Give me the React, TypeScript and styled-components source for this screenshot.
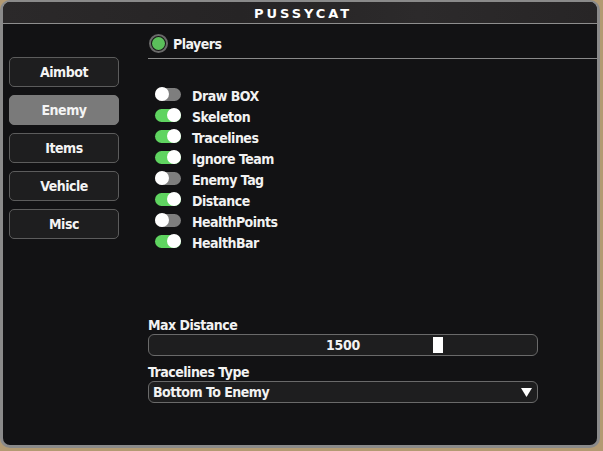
import React from "react";
import styled, { createGlobalStyle } from "styled-components";

const Global = createGlobalStyle`
  html, body { margin: 0; padding: 0; }
  body {
    width: 603px; height: 451px; overflow: hidden;
    background: #b39a72;
    font-family: "DejaVu Sans Condensed", "DejaVu Sans", sans-serif;
    font-stretch: condensed;
    font-weight: bold;
    color: #f2f2f2;
  }
`;

const Window = styled.div`
  box-sizing: border-box;
  width: 600px;
  height: 448px;
  border: 3px solid #8a8a8a;
  border-top-width: 2px;
  border-radius: 10px;
  background: #121214;
  overflow: hidden;
  display: flex;
  flex-direction: column;
`;

const TitleBar = styled.div`
  height: 22px;
  flex: none;
  background: linear-gradient(90deg, #2b292a, #262425 40%, #2c2a2b 70%, #272526);
  border-bottom: 1px solid #8e8e8e;
  display: flex;
  align-items: center;
  justify-content: center;
  font-family: "DejaVu Sans", sans-serif;
  font-stretch: normal;
  font-size: 13px;
  letter-spacing: 2.9px;
  padding-left: 6px;
  padding-top: 1px;
  box-sizing: border-box;
  color: #ffffff;
`;

const Body = styled.div`
  flex: 1;
  display: flex;
`;

const Sidebar = styled.div`
  width: 145px;
  flex: none;
  box-sizing: border-box;
  padding: 33px 0 0 6px;
  display: flex;
  flex-direction: column;
  gap: 8px;
`;

const NavButton = styled.div<{ $active?: boolean }>`
  box-sizing: border-box;
  width: 110px;
  height: 30px;
  border-radius: 5px;
  border: 1px solid ${(p) => (p.$active ? "#7a7a7a" : "#5c5c5c")};
  background: ${(p) => (p.$active ? "#7a7a7a" : "#1e1e1f")};
  display: flex;
  align-items: center;
  justify-content: center;
  font-size: 14px;
  letter-spacing: -0.5px;
  color: #f4f4f4;
`;

const Content = styled.div`
  flex: 1;
  display: flex;
  flex-direction: column;
`;

const Header = styled.div`
  margin-top: 10px;
  height: 24px;
  border-bottom: 1px solid #8a8a8a;
  display: flex;
  align-items: flex-start;
  gap: 5px;
`;

const Radio = styled.div`
  box-sizing: border-box;
  width: 19px;
  height: 19px;
  margin-left: 1px;
  border-radius: 50%;
  border: 2px solid #6a6a6a;
  background: #141414;
  padding: 1px;
  &::after {
    content: "";
    display: block;
    width: 100%;
    height: 100%;
    border-radius: 50%;
    background: #5bbf5b;
  }
`;

const HeaderLabel = styled.span`
  font-size: 14px;
  letter-spacing: -0.5px;
  line-height: 20px;
`;

const ToggleList = styled.div`
  margin-top: 30px;
  margin-left: 7px;
  display: flex;
  flex-direction: column;
  gap: 7px;
`;

const ToggleRow = styled.div`
  display: flex;
  align-items: center;
  height: 14px;
  gap: 11px;
`;

const Track = styled.div<{ $on: boolean }>`
  position: relative;
  width: 26px;
  height: 13px;
  border-radius: 7px;
  background: ${(p) => (p.$on ? "#5fd460" : "#7e7e7e")};
  margin-top: -4px;
  &::after {
    content: "";
    position: absolute;
    top: -0.5px;
    left: ${(p) => (p.$on ? "12px" : "0px")};
    width: 14px;
    height: 14px;
    border-radius: 50%;
    background: #ffffff;
  }
`;

const ToggleLabel = styled.span`
  font-size: 14px;
  letter-spacing: -0.5px;
  line-height: 14px;
`;

const Spacer = styled.div`
  flex: 1;
`;

const FieldLabel = styled.div`
  font-size: 14px;
  letter-spacing: -0.5px;
  line-height: 14px;
  margin-bottom: 2px;
`;

const Slider = styled.div`
  position: relative;
  box-sizing: border-box;
  width: 390px;
  height: 22px;
  border-radius: 6px;
  border: 1px solid #6a6a6a;
  background: #1e1e1f;
  display: flex;
  align-items: center;
  justify-content: center;
  font-size: 14px;
  letter-spacing: -0.3px;
  margin-bottom: 9px;
`;

const Handle = styled.div`
  position: absolute;
  top: 2px;
  width: 10px;
  height: 16px;
  background: #ffffff;
`;

const Select = styled.div`
  box-sizing: border-box;
  width: 390px;
  height: 22px;
  border-radius: 6px;
  border: 1px solid #6a6a6a;
  background: #1e1e1f;
  display: flex;
  align-items: center;
  justify-content: space-between;
  padding: 0 5px 0 4px;
  font-size: 14px;
  letter-spacing: -0.5px;
  margin-bottom: 42px;
`;

const Caret = styled.svg`
  width: 11px;
  height: 9px;
`;

const toggles: [string, boolean][] = [
  ["Draw BOX", false],
  ["Skeleton", true],
  ["Tracelines", true],
  ["Ignore Team", true],
  ["Enemy Tag", false],
  ["Distance", true],
  ["HealthPoints", false],
  ["HealthBar", true],
];

export default function App() {
  const value = 1500;
  const max = 2000;
  const handleLeft = Math.round((value / max) * 376) + 2;
  return (
    <>
      <Global />
      <Window>
        <TitleBar>PUSSYCAT</TitleBar>
        <Body>
          <Sidebar>
            <NavButton>Aimbot</NavButton>
            <NavButton $active>Enemy</NavButton>
            <NavButton>Items</NavButton>
            <NavButton>Vehicle</NavButton>
            <NavButton>Misc</NavButton>
          </Sidebar>
          <Content>
            <Header>
              <Radio />
              <HeaderLabel>Players</HeaderLabel>
            </Header>
            <ToggleList>
              {toggles.map(([name, on]) => (
                <ToggleRow key={name}>
                  <Track $on={on} />
                  <ToggleLabel>{name}</ToggleLabel>
                </ToggleRow>
              ))}
            </ToggleList>
            <Spacer />
            <FieldLabel>Max Distance</FieldLabel>
            <Slider>
              {value}
              <Handle style={{ left: handleLeft }} />
            </Slider>
            <FieldLabel>Tracelines Type</FieldLabel>
            <Select>
              <span>Bottom To Enemy</span>
              <Caret viewBox="0 0 11 9">
                <polygon points="0,0 11,0 5.5,9" fill="#ffffff" />
              </Caret>
            </Select>
          </Content>
        </Body>
      </Window>
    </>
  );
}
